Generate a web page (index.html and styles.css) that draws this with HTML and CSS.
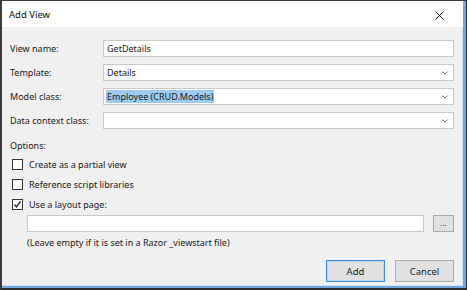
FILE: index.html
```html
<!DOCTYPE html>
<html>
<head>
<meta charset="utf-8">
<link rel="stylesheet" href="styles.css">
</head>
<body>
<div class="window">
  <div class="dialog">
    <div class="titlebar">
      <span class="title">Add View</span>
      <svg class="close" width="9" height="9" viewBox="0 0 9 9"><path d="M0.5 0.5 L8.5 8.5 M8.5 0.5 L0.5 8.5" stroke="#222" stroke-width="1" fill="none"/></svg>
    </div>
    <div class="body">
      <div class="form">
        <label class="lbl">View name:</label>
        <div class="field"><span class="val">GetDetails</span></div>
        <label class="lbl">Template:</label>
        <div class="field combo"><span class="val">Details</span><svg class="chev" width="6" height="4" viewBox="0 0 6 4"><path d="M0.5 0.5 L3 3 L5.5 0.5" stroke="#777" stroke-width="1" fill="none"/></svg></div>
        <label class="lbl">Model class:</label>
        <div class="field combo"><span class="val sel">Employee (CRUD.Models)</span><svg class="chev" width="6" height="4" viewBox="0 0 6 4"><path d="M0.5 0.5 L3 3 L5.5 0.5" stroke="#777" stroke-width="1" fill="none"/></svg></div>
        <label class="lbl">Data context class:</label>
        <div class="field combo"><span class="val"></span><svg class="chev" width="6" height="4" viewBox="0 0 6 4"><path d="M0.5 0.5 L3 3 L5.5 0.5" stroke="#777" stroke-width="1" fill="none"/></svg></div>
      </div>
      <div class="options">Options:</div>
      <div class="checks">
        <div class="check"><span class="box"></span><span>Create as a partial view</span></div>
        <div class="check"><span class="box"></span><span>Reference script libraries</span></div>
        <div class="check"><span class="box"><svg width="9" height="9" viewBox="0 0 9 9"><path d="M1.5 4.5 L3.5 7 L7.5 1.5" stroke="#222" stroke-width="1.3" fill="none"/></svg></span><span>Use a layout page:</span></div>
      </div>
      <div class="layout-row">
        <div class="field wide"></div>
        <div class="browse">...</div>
      </div>
      <div class="hint">(Leave empty if it is set in a Razor _viewstart file)</div>
      <div class="buttons">
        <div class="btn default">Add</div>
        <div class="btn">Cancel</div>
      </div>
    </div>
  </div>
</div>
</body>
</html>
```
FILE: styles.css
```css
html, body {
  margin: 0;
  padding: 0;
  background: #2b2b2b;
}
.window {
  width: 467px;
  height: 290px;
  box-sizing: border-box;
  border-top: 1px solid #3a3a3a;
  border-left: 2px solid #3a3a3a;
  border-right: 1px solid #2e2e2e;
  border-bottom: 2px solid #2e2e2e;
  font-family: "Noto Sans", "Open Sans", sans-serif;
  font-size: 9px;
  color: #1a1a1a;
}
.dialog {
  height: 100%;
  box-sizing: border-box;
  background: #f0f0f0;
  border-right: 3px solid #6ea7dd;
  border-bottom: 2px solid #6ea7dd;
  box-shadow: inset -1px -1px 0 #cfe3f6;
  display: flex;
  flex-direction: column;
}
.titlebar {
  height: 26px;
  background: #ffffff;
  display: flex;
  align-items: center;
  justify-content: space-between;
  padding: 0 19px 0 7px;
  flex: none;
}
.title {
  font-size: 9.5px;
  color: #111;
  margin-top: 1px;
}
.close {
  margin-top: 2px;
}
.body {
  padding: 13px 9px 0 8px;
  display: flex;
  flex-direction: column;
}
.form {
  display: grid;
  grid-template-columns: 93px 1fr;
  row-gap: 7px;
  align-items: center;
}
.lbl {
  line-height: 17px;
}
.field {
  height: 17px;
  box-sizing: border-box;
  background: #ffffff;
  border: 1px solid #c9c9c9;
  display: flex;
  align-items: center;
  padding-left: 3px;
}
.combo {
  justify-content: space-between;
  padding-right: 5px;
}
.val {
  line-height: 13px;
}
.sel {
  background: #9fcbf0;
  padding: 0 1px;
  margin-left: -1px;
}
.chev {
  flex: none;
}
.options {
  margin-top: 10px;
  line-height: 13px;
}
.checks {
  display: flex;
  flex-direction: column;
  gap: 7px;
  margin-top: 6px;
  padding-left: 2px;
}
.check {
  display: flex;
  align-items: center;
  gap: 6px;
  line-height: 13px;
}
.box {
  width: 11px;
  height: 11px;
  box-sizing: border-box;
  border: 1px solid #333;
  background: #fff;
  display: flex;
  align-items: center;
  justify-content: center;
  flex: none;
}
.layout-row {
  display: flex;
  gap: 9px;
  margin-top: 4px;
  padding-left: 17px;
}
.wide {
  flex: 1;
}
.browse {
  width: 21px;
  height: 17px;
  box-sizing: border-box;
  border: 1px solid #a8a8a8;
  background: #e1e1e1;
  font-size: 8px;
  display: flex;
  align-items: center;
  justify-content: center;
  line-height: 1;
  padding-bottom: 2px;
  color: #333;
}
.hint {
  padding-left: 17px;
  margin-top: 4px;
  line-height: 13px;
}
.buttons {
  display: flex;
  justify-content: flex-end;
  gap: 10px;
  margin-top: 11px;
}
.btn {
  width: 59px;
  height: 22px;
  box-sizing: border-box;
  border: 1px solid #adadad;
  background: #e1e1e1;
  display: flex;
  align-items: center;
  justify-content: center;
  font-size: 9.5px;
}
.btn.default {
  border: 1px solid #3f8fd9;
  box-shadow: inset 0 0 0 1px #b8d6f3;
}
```
